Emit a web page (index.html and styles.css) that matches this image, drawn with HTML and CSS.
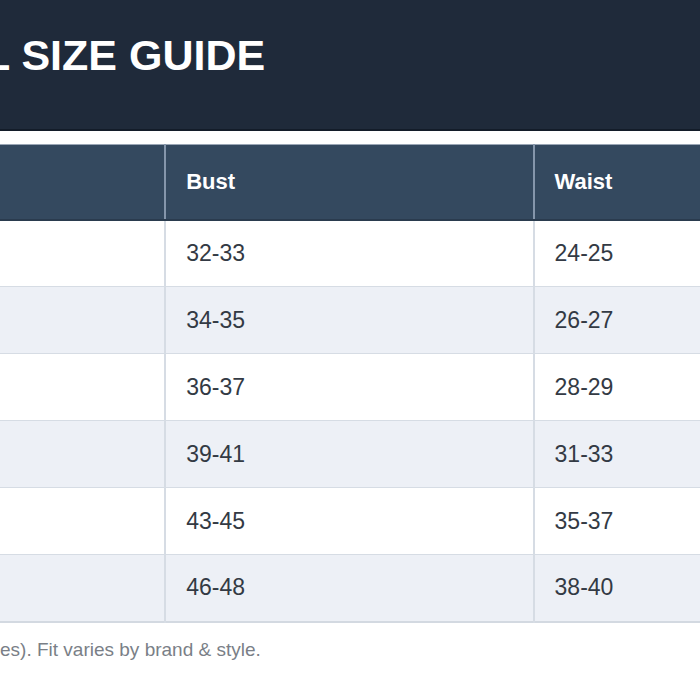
FILE: index.html
```html
<!DOCTYPE html>
<html lang="en">
<head>
<meta charset="utf-8">
<title>Size Guide</title>
<link rel="stylesheet" href="styles.css">
</head>
<body>
<header class="banner">
  <h1 class="title">L SIZE GUIDE</h1>
</header>
<main class="content">
  <table class="sizes">
    <colgroup>
      <col class="c-size">
      <col class="c-meas">
      <col class="c-meas">
    </colgroup>
    <thead>
      <tr><th></th><th>Bust</th><th>Waist</th></tr>
    </thead>
    <tbody>
      <tr><td></td><td>32-33</td><td>24-25</td></tr>
      <tr><td></td><td>34-35</td><td>26-27</td></tr>
      <tr><td></td><td>36-37</td><td>28-29</td></tr>
      <tr><td></td><td>39-41</td><td>31-33</td></tr>
      <tr><td></td><td>43-45</td><td>35-37</td></tr>
      <tr><td></td><td>46-48</td><td>38-40</td></tr>
    </tbody>
  </table>
  <p class="note">es). Fit varies by brand &amp; style.</p>
</main>
</body>
</html>
```
FILE: styles.css
```css
html, body {
  margin: 0;
  padding: 0;
  background: #ffffff;
  overflow: hidden;
  font-family: "Liberation Sans", Arial, sans-serif;
}

.banner {
  height: 131px;
  background: #1f2a3a;
  border-bottom: 2px solid #131c29;
  padding-top: 33px;
  box-sizing: border-box;
}

.title {
  margin: 0 0 0 -16px;
  font-size: 43px;
  line-height: 44px;
  font-weight: 700;
  color: #ffffff;
  white-space: nowrap;
}

.content {
  padding-top: 13px;
}

.sizes {
  border-collapse: collapse;
  table-layout: fixed;
  width: 902px;
  border-top: 1px solid #9aa6b5;
  border-bottom: 2px solid #d3d9e1;
}

.c-size { width: 165px; }
.c-meas { width: 368px; }

.sizes th {
  height: 75px;
  background: #34495f;
  color: #ffffff;
  font-size: 22px;
  font-weight: 700;
  text-align: left;
  padding: 0 20px;
  border-left: 2px solid #8596ab;
  border-bottom: 2px solid #2a3b4e;
  box-sizing: border-box;
}

.sizes th:first-child { border-left: none; }

.sizes td {
  height: 67px;
  padding: 0 20px;
  font-size: 23px;
  color: #333a44;
  border-left: 2px solid #d6dce4;
  border-top: 1px solid #d6dce4;
  box-sizing: border-box;
}

.sizes td:first-child { border-left: none; }

.sizes tbody tr:first-child td { border-top: none; }

.sizes tbody tr:nth-child(even) td { background: #edf0f6; }

.note {
  margin: 16px 0 0 0;
  font-size: 19px;
  color: #7a7f87;
  white-space: nowrap;
}
```
